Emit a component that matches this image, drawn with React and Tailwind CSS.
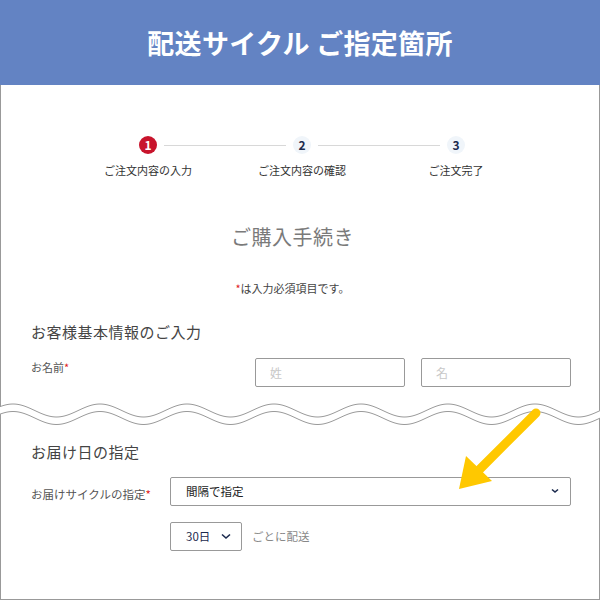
import React from "react";

const FONT = { fontFamily: '"Noto Sans CJK JP", "Noto Sans", sans-serif' };

// two parallel sine lines, the band between them is white and hides the frame
function waveLine(c, a) {
    const pts = [];
    for (let x = -4; x <= 604; x += 2) {
        const y = c - a * Math.cos((2 * Math.PI * (x - 100)) / 87);
        pts.push([x, y]);
    }
    return pts;
}

function WaveDivider() {
    const top = waveLine(10.5, 6.5);
    const bottom = waveLine(18, 6.5);
    const toD = (pts) => pts.map((p, i) => `${i === 0 ? "M" : "L"}${p[0]} ${p[1].toFixed(2)}`).join(" ");
    const band = toD(top) + " " + [...bottom].reverse().map((p) => `L${p[0]} ${p[1].toFixed(2)}`).join(" ") + " Z";
    return (
        <svg width="600" height="26" viewBox="0 0 600 26" className="block -mx-px">
            <path d={band} fill="#ffffff" />
            <path d={toD(top)} fill="none" stroke="#9a9a9a" strokeWidth="1" />
            <path d={toD(bottom)} fill="none" stroke="#9a9a9a" strokeWidth="1" />
        </svg>
    );
}

function Chevron({ w = 8 }) {
    return (
        <svg width={w + 2} height="7" viewBox={`0 0 ${w + 2} 7`}>
            <path d={`M1 1.5 L${(w + 2) / 2} ${w / 2 + 1} L${w + 1} 1.5`} fill="none" stroke="#1b2a4e" strokeWidth="1.6" />
        </svg>
    );
}

export default function App() {
    return (
        <div className="relative w-[600px] h-[600px] overflow-hidden bg-white" style={FONT}>
            {/* Header */}
            <div className="h-[85px] bg-[#6383c3] flex items-center justify-center">
                <h1 className="text-white text-[27px] font-bold tracking-[0.3px] leading-none">配送サイクル ご指定箇所</h1>
            </div>

            <div className="h-[515px] border-x border-b border-[#999]">
                {/* Steps */}
                <div className="pt-[51px]">
                    <div className="flex items-center w-[326px] ml-[138px]">
                        <div className="w-[18px] h-[18px] rounded-full bg-[#c8142c] text-white text-[12px] font-bold flex items-center justify-center leading-none">1</div>
                        <div className="flex-1 h-px bg-[#d8d8d8] mx-[7px]" />
                        <div className="w-[18px] h-[18px] rounded-full bg-[#f0f5fa] text-[#1b2a4e] text-[12px] font-bold flex items-center justify-center leading-none">2</div>
                        <div className="flex-1 h-px bg-[#d8d8d8] mx-[7px]" />
                        <div className="w-[18px] h-[18px] rounded-full bg-[#f0f5fa] text-[#1b2a4e] text-[12px] font-bold flex items-center justify-center leading-none">3</div>
                    </div>
                    <div className="grid grid-cols-3 w-[462px] ml-[70px] mt-[8px] text-[11px] leading-[16px] text-[#333] text-center">
                        <div>ご注文内容の入力</div>
                        <div>ご注文内容の確認</div>
                        <div>ご注文完了</div>
                    </div>
                </div>

                {/* Title */}
                <div className="pr-[15px] text-center">
                    <h2 className="mt-[45px] text-[20px] leading-[28px] tracking-[0.5px] text-[#7a7a7a]">ご購入手続き</h2>
                    <p className="mt-[29px] text-[11px] leading-[16px] text-[#444]">
                        <span className="text-[#e02020]">*</span>は入力必須項目です。
                    </p>
                </div>

                {/* Customer info */}
                <div className="pl-[30px] pr-[28px]">
                    <h3 className="mt-[25px] text-[15px] leading-[22px] tracking-[0.5px] text-[#444]">お客様基本情報のご入力</h3>
                    <div className="mt-[15px] flex justify-between items-start">
                        <div className="text-[11px] leading-[16px] text-[#555] pt-px">
                            お名前<span className="text-[#e02020]">*</span>
                        </div>
                        <div className="flex gap-[16px]">
                            <div className="w-[150px] h-[29px] border border-[#999] rounded-[2px] flex items-center pl-[14px] text-[12px] text-[#c8c8c8]">姓</div>
                            <div className="w-[150px] h-[29px] border border-[#999] rounded-[2px] flex items-center pl-[14px] text-[12px] text-[#c8c8c8]">名</div>
                        </div>
                    </div>
                </div>

                <div className="mt-[13px]">
                    <WaveDivider />
                </div>

                {/* Delivery */}
                <div className="pl-[30px] pr-[28px]">
                    <h3 className="mt-[15px] text-[15px] leading-[22px] tracking-[0.5px] text-[#444]">お届け日の指定</h3>
                    <div className="mt-[14px] flex items-center">
                        <div className="w-[139px] shrink-0 text-[11.5px] leading-[16px] text-[#555] pt-[4px]">
                            お届けサイクルの指定<span className="text-[#e02020]">*</span>
                        </div>
                        <div className="flex-1 h-[29px] border border-[#999] rounded-[2px] flex items-center justify-between pl-[15px] pr-[11px] text-[11.5px] text-[#222]">
                            <span>間隔で指定</span>
                            <Chevron w={6} />
                        </div>
                    </div>
                    <div className="mt-[16px] ml-[139px] flex items-center">
                        <div className="w-[72px] h-[29px] border border-[#999] rounded-[2px] flex items-center justify-between pl-[15px] pr-[10px] text-[11.5px] text-[#1b2a4e]">
                            <span>30日</span>
                            <Chevron w={8} />
                        </div>
                        <span className="ml-[10px] text-[11.5px] text-[#888]">ごとに配送</span>
                    </div>
                </div>
            </div>

            {/* Yellow pointer arrow */}
            <svg className="absolute left-0 top-0 pointer-events-none" width="600" height="600" viewBox="0 0 600 600">
                <line x1="536" y1="413" x2="478" y2="471" stroke="#ffc800" strokeWidth="9" strokeLinecap="round" />
                <polygon points="466,456 459,489 492,481" fill="#ffc800" />
            </svg>
        </div>
    );
}
